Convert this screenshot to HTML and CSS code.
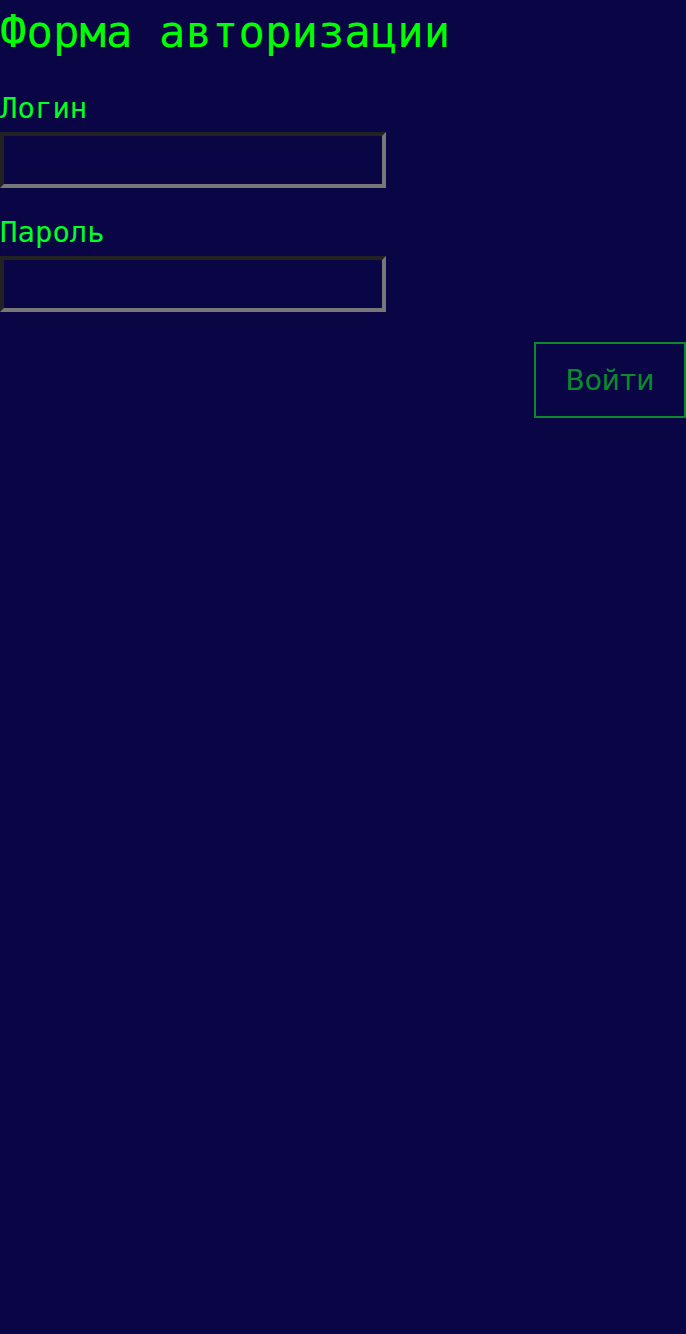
FILE: index.html
```html
<!DOCTYPE html>
<html lang="ru">
<head>
<meta charset="utf-8">
<link rel="stylesheet" href="styles.css">
</head>
<body>
<form class="auth">
  <h1 class="title">Форма авторизации</h1>
  <div class="field">
    <label class="label" for="login">Логин</label>
    <input class="input" id="login" type="text">
  </div>
  <div class="field">
    <label class="label" for="pass">Пароль</label>
    <input class="input" id="pass" type="password">
  </div>
  <div class="actions">
    <button class="btn" type="button">Войти</button>
  </div>
</form>
</body>
</html>
```
FILE: styles.css
```css
html, body {
  margin: 0;
  padding: 0;
  background: #0a0646;
  height: 100%;
}
.auth {
  display: flex;
  flex-direction: column;
  margin: 0;
}
.title {
  margin: 0;
  padding-top: 4px;
  font-family: "DejaVu Sans Mono", monospace;
  font-weight: normal;
  font-size: 44px;
  line-height: 56px;
  color: #00ff00;
}
.field {
  display: flex;
  flex-direction: column;
  margin-top: 30px;
}
.field + .field {
  margin-top: 26px;
}
.label {
  font-family: "DejaVu Sans Mono", monospace;
  font-size: 29px;
  line-height: 36px;
  color: #00ff22;
  margin-bottom: 6px;
}
.input {
  box-sizing: border-box;
  width: 386px;
  height: 56px;
  margin: 0;
  padding: 0;
  background: #0a0646;
  border: 4px solid;
  border-color: #222222 #777777 #777777 #222222;
  outline: none;
}
.actions {
  display: flex;
  justify-content: flex-end;
  margin-top: 30px;
}
.btn {
  box-sizing: border-box;
  width: 152px;
  height: 76px;
  background: transparent;
  border: 2px solid #0a8a2a;
  color: #088c2c;
  font-family: "DejaVu Sans", sans-serif;
  font-size: 28px;
  padding: 0;
}
```
